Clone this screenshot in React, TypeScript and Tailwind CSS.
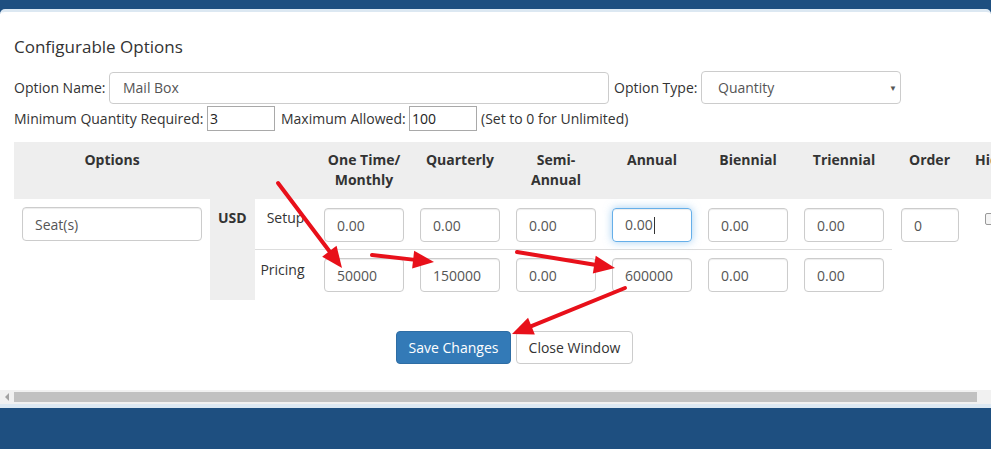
import React from "react";

const font = { fontFamily: '"Open Sans", "Liberation Sans", sans-serif' };

function Arrow({ x1, y1, x2, y2 }: { x1: number; y1: number; x2: number; y2: number }) {
  const dx = x2 - x1;
  const dy = y2 - y1;
  const len = Math.sqrt(dx * dx + dy * dy);
  const ux = dx / len;
  const uy = dy / len;
  const hl = 21;
  const hw = 9;
  const bx = x2 - ux * hl;
  const by = y2 - uy * hl;
  const px = -uy;
  const py = ux;
  const pts = `${x2},${y2} ${bx + px * hw},${by + py * hw} ${bx - px * hw},${by - py * hw}`;
  return (
    <g>
      <line x1={x1} y1={y1} x2={bx + ux * 2} y2={by + uy * 2} stroke="#e8101a" strokeWidth={4} strokeLinecap="round" />
      <polygon points={pts} fill="#e8101a" />
    </g>
  );
}

function Field({ value, w = "w-[80px]" }: { value: string; w?: string }) {
  return (
    <input
      readOnly
      value={value}
      className={`${w} h-[34px] rounded-[4px] border border-[#cccccc] bg-white pl-[12px] text-[14px] text-[#555555] outline-none shadow-[inset_0_1px_1px_rgba(0,0,0,0.075)]`}
      style={font}
    />
  );
}

const periods = [
  ["One Time/", "Monthly"],
  ["Quarterly"],
  ["Semi-", "Annual"],
  ["Annual"],
  ["Biennial"],
  ["Triennial"],
];

const setup = ["0.00", "0.00", "0.00", "FOCUS", "0.00", "0.00"];
const pricing = ["50000", "150000", "0.00", "600000", "0.00", "0.00"];

export default function App() {
  return (
    <div className="relative w-[991px] h-[449px] overflow-hidden bg-[#1e4f80] pt-[9px] text-[#333333]" style={font}>
      <div className="w-[991px] h-[399px] bg-white rounded-t-[5px] border-t-[3px] border-b-[4px] border-[#dce8f2] flex flex-col overflow-hidden">
        <div className="pl-[14px] mt-[23px] text-[17px] leading-[24px]">Configurable Options</div>

        <div className="flex items-center pl-[14px] mt-[12px] text-[14px] h-[33px]">
          <span className="w-[95px]">Option Name:</span>
          <div className="w-[500px] h-[32px] rounded-[4px] border border-[#cccccc] flex items-center pl-[13px] text-[#555555]">
            Mail Box
          </div>
          <span className="ml-[5px] w-[87px]">Option Type:</span>
          <div className="w-[200px] h-[33px] rounded-[4px] border border-[#cccccc] flex items-center pl-[16px] pr-[3px] text-[#555555]">
            <span className="flex-1">Quantity</span>
            <span className="text-[8px] text-[#555555]">▼</span>
          </div>
        </div>

        <div className="flex items-center pl-[14px] mt-[2px] text-[14px] h-[25px]">
          <span className="w-[193px]">Minimum Quantity Required:</span>
          <div className="w-[68px] h-[25px] border border-[#a9a9a9] flex items-center pl-[2px] text-[#222]">3</div>
          <span className="ml-[6px] w-[128px]">Maximum Allowed:</span>
          <div className="w-[68px] h-[25px] border border-[#a9a9a9] flex items-center pl-[2px] text-[#222]">100</div>
          <span className="ml-[4px]">(Set to 0 for Unlimited)</span>
        </div>

        <div
          className="ml-[14px] mt-[11px] grid text-[14px] leading-[20px] w-[1013px]"
          style={{ gridTemplateColumns: "196px 45px 61px repeat(6, 96px) 75px 60px", gridTemplateRows: "57px 51px 50px" }}
        >
          <div className="bg-[#eeeeee] font-bold text-center pt-[8px]">Options</div>
          <div className="bg-[#eeeeee]" />
          <div className="bg-[#eeeeee]" />
          {periods.map((p, i) => (
            <div key={i} className="bg-[#eeeeee] font-bold text-center pt-[8px]">
              {p.map((l, j) => (
                <div key={j}>{l}</div>
              ))}
            </div>
          ))}
          <div className="bg-[#eeeeee] font-bold text-center pt-[8px]">Order</div>
          <div className="bg-[#eeeeee] font-bold pt-[8px] pl-[8px]">Hidden</div>

          <div className="row-span-2 p-[8px]">
            <Field value="Seat(s)" w="w-[180px]" />
          </div>
          <div className="row-span-2 bg-[#eeeeee] font-bold pt-[9px] pl-[8px]">USD</div>
          <div className="border-b border-[#dddddd] text-center pt-[9px]">Setup</div>
          {setup.map((v, i) => (
            <div key={i} className="border-b border-[#dddddd] pt-[9px] pl-[8px]">
              {v === "FOCUS" ? (
                <div className="w-[80px] h-[34px] rounded-[4px] border border-[#66afe9] shadow-[inset_0_1px_1px_rgba(0,0,0,0.075),0_0_8px_rgba(102,175,233,0.6)] flex items-center pl-[12px] text-[#555555]">
                  0.00<span className="w-px h-[17px] bg-[#333] ml-px" />
                </div>
              ) : (
                <Field value={v} />
              )}
            </div>
          ))}
          <div className="pt-[9px] pl-[9px]">
            <Field value="0" w="w-[58px]" />
          </div>
          <div className="pt-[14px] pl-[18px]">
            <div className="w-[12px] h-[12px] rounded-[2px] border border-[#999999] bg-[#f4f4f4]" />
          </div>

          <div className="text-center pt-[10px] pr-[6px]">Pricing</div>
          {pricing.map((v, i) => (
            <div key={i} className="pt-[8px] pl-[8px]">
              <Field value={v} />
            </div>
          ))}
          <div />
          <div />
        </div>

        <div className="flex gap-[5px] ml-[396px] mt-[31px] text-[14px]">
          <button className="w-[115px] h-[33px] rounded-[4px] bg-[#337ab7] border border-[#2e6da4] text-white">
            Save Changes
          </button>
          <button className="w-[117px] h-[33px] rounded-[4px] bg-white border border-[#cccccc] text-[#333333]">
            Close Window
          </button>
        </div>

        <div className="mt-auto h-[14px] bg-[#f1f1f1] flex items-center">
          <div className="w-[14px] flex justify-center">
            <div className="w-0 h-0 border-y-[4px] border-y-transparent border-r-[4px] border-r-[#a3a3a3]" />
          </div>
          <div className="w-[963px] h-[10px] bg-[#c1c1c1]" />
          <div className="w-[14px]" />
        </div>
      </div>

      <svg className="absolute left-0 top-0 pointer-events-none" width={991} height={449}>
        <Arrow x1={278} y1={183} x2={342} y2={268} />
        <Arrow x1={372} y1={255} x2={434} y2={262} />
        <Arrow x1={517} y1={252} x2={615} y2={268} />
        <Arrow x1={625} y1={288} x2={512} y2={334} />
      </svg>
    </div>
  );
}
